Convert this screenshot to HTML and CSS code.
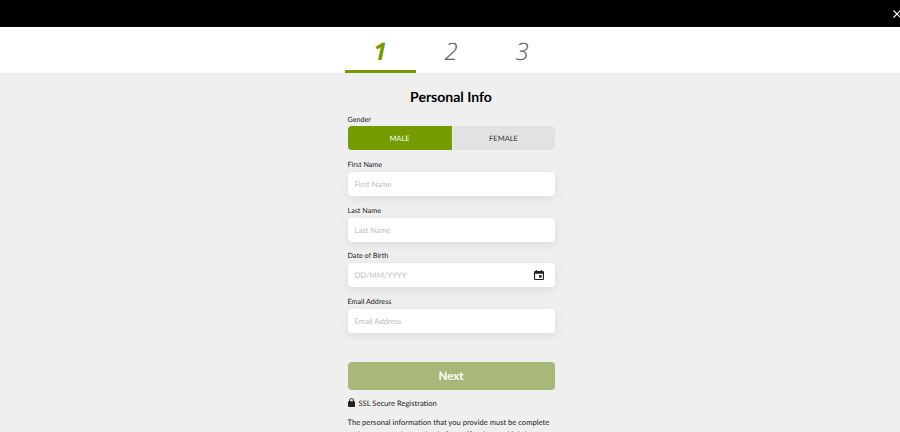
FILE: index.html
```html
<!DOCTYPE html>
<html>
  <head>
    <meta charset="UTF-8" />
    <title>Register</title>
    <link rel="stylesheet" href="styles.css">
  </head>
  <body>
    <div class="topbar">
      <button class="close" aria-label="Close">
        <svg width="8" height="8" viewBox="0 0 8 8"><path d="M0.5 0.5L7.5 7.5M7.5 0.5L0.5 7.5" stroke="#fff" stroke-width="1.1" fill="none"/></svg>
      </button>
    </div>
    <div class="steps">
      <div class="step active">1</div>
      <div class="step">2</div>
      <div class="step">3</div>
    </div>
    <div class="content">
      <form class="form">
        <h1>Personal Info</h1>
        <label class="field-label gender-label">Gender</label>
        <div class="gender">
          <button type="button" class="male">MALE</button>
          <button type="button" class="female">FEMALE</button>
        </div>
        <label class="field-label" for="first">First Name</label>
        <div class="input-box"><input type="text" id="first" placeholder="First Name" /></div>
        <label class="field-label" for="last">Last Name</label>
        <div class="input-box"><input type="text" id="last" placeholder="Last Name" /></div>
        <label class="field-label" for="dob">Date of Birth</label>
        <div class="input-box">
          <input type="text" id="dob" placeholder="DD/MM/YYYY" />
          <svg class="calendar" width="10" height="10" viewBox="0 0 11 11"><path fill="#222" fill-rule="evenodd" d="M2 0h1.200v1h4.600V0H9v1h.6c.8 0 1.400.6 1.400 1.400v7.200c0 .8-.6 1.400-1.400 1.400H1.400C.6 11 0 10.400 0 9.600V2.400C0 1.600.6 1 1.400 1H2zM1.200 4v5.800h8.600V4z"/><rect x="5.600" y="5.600" width="2.800" height="2.800" fill="#222"/></svg>
        </div>
        <label class="field-label" for="email">Email Address</label>
        <div class="input-box"><input type="text" id="email" placeholder="Email Address" /></div>
        <button type="button" class="next">Next</button>
        <div class="secure">
          <svg width="7" height="9" viewBox="0 0 8 10"><path fill="#222" fill-rule="evenodd" d="M1.300 3.500V2.700a2.700 2.700 0 0 1 5.400 0v.8H7c.6 0 1 .4 1 1V9c0 .6-.4 1-1 1H1c-.6 0-1-.4-1-1V4.500c0-.6.4-1 1-1zm1.100 0h3.200V2.700a1.600 1.600 0 0 0-3.200 0z"/></svg>
          <span>SSL Secure Registration</span>
        </div>
        <p class="note">The personal information that you provide must be complete and accurate to be used only for verification, and it is kept private and secure at all times.</p>
      </form>
    </div>
  </body>
</html>
```
FILE: styles.css
```css
* {
  box-sizing: border-box;
  font-family: Lato, "Noto Sans", Arial, sans-serif;
  text-rendering: geometricPrecision;
}

html, body {
  margin: 0;
  height: 432px;
  overflow: hidden;
}

body {
  background-color: #efefef;
  color: #222;
}

.topbar {
  display: flex;
  align-items: center;
  justify-content: flex-end;
  height: 27px;
  background-color: #000;
}

.close {
  display: flex;
  padding: 0;
  margin-right: -1px;
  background: none;
  border: none;
}

.steps {
  display: flex;
  justify-content: center;
  height: 46px;
  padding-left: 2px;
  background-color: #fff;
}

.step {
  width: 71px;
  padding-top: 9px;
  text-align: center;
  font-family: "Noto Sans", Arial, sans-serif;
  font-size: 24px;
  line-height: 32px;
  font-style: italic;
  font-weight: 300;
  color: #666;
}

.step.active {
  font-weight: 700;
  color: #749b00;
  border-bottom: 3px solid #749b00;
}

.content {
  padding-left: 2px;
}

.form {
  display: flex;
  flex-direction: column;
  width: 207px;
  margin: 0 auto;
  padding-top: 14px;
}

.form h1 {
  margin: 0 0 7px;
  text-align: center;
  font-size: 14px;
  line-height: 20px;
  font-weight: 700;
  color: #000;
}

.field-label {
  display: block;
  margin-bottom: 1px;
  font-size: 7.200px;
  line-height: 12px;
  color: #222;
}

.gender-label {
  margin-bottom: 0;
}

.gender {
  display: flex;
  gap: 1px;
  height: 24px;
  margin-bottom: 9px;
}

.gender button {
  padding: 0;
  border: none;
  font-size: 7.500px;
  font-weight: 400;
}

.male {
  width: 104px;
  background-color: #749b00;
  color: #fff;
  border-radius: 4px 0 0 4px;
}

.female {
  flex: 1;
  background-color: #e2e2e2;
  color: #333;
  border-radius: 0 4px 4px 0;
}

.input-box {
  display: flex;
  align-items: center;
  height: 24px;
  margin-bottom: 8.670px;
  padding: 0 11px 0 7px;
  background-color: #fff;
  border-radius: 4px;
  box-shadow: 0 3px 10px rgba(0, 0, 0, 0.08);
}

.input-box input {
  flex: 1;
  min-width: 0;
  padding: 0;
  border: none;
  outline: none;
  background: none;
  font-size: 7.700px;
}

.input-box input::placeholder {
  color: #bbb;
}

.next {
  height: 28px;
  margin-top: 20px;
  padding: 2px 0 0;
  background-color: #a7b878;
  color: #fff;
  border: none;
  border-radius: 4px;
  font-size: 11.600px;
  font-weight: 700;
}

.secure {
  display: flex;
  align-items: center;
  gap: 4px;
  margin-top: 7px;
  font-size: 7.600px;
  line-height: 12px;
  color: #222;
}

.note {
  margin: 7px 0 0;
  font-size: 7.600px;
  line-height: 12.500px;
  color: #222;
}
```
